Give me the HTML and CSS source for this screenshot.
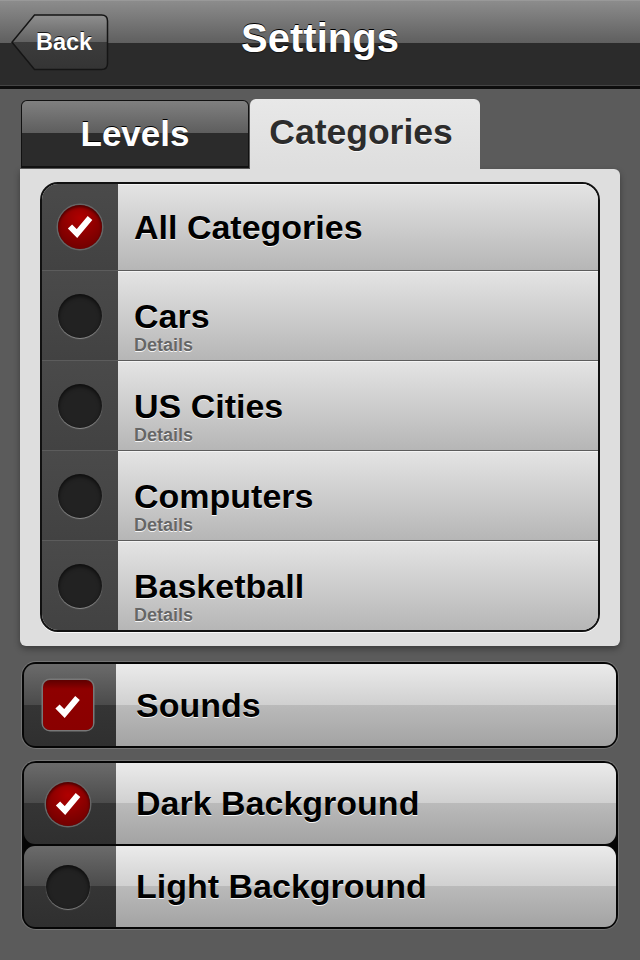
FILE: index.html
```html
<!DOCTYPE html>
<html lang="en">
<head>
  <meta charset="UTF-8" />
  <meta name="viewport" content="width=device-width, initial-scale=1.0"/>
  <title>Settings</title>
  <link rel="stylesheet" href="styles.css">
</head>
<body>

  <header class="navbar">
    <a class="back-btn" href="#">
      <svg class="back-shape" width="98" height="57" viewBox="0 0 98 57">
        <defs>
          <linearGradient id="backGrad" x1="0" y1="0" x2="0" y2="1">
            <stop offset="0" stop-color="#8f8f8f"/>
            <stop offset="0.5" stop-color="#616161"/>
            <stop offset="0.5" stop-color="#3c3c3c"/>
            <stop offset="1" stop-color="#343434"/>
          </linearGradient>
        </defs>
        <path d="M23.5 1 H90.5 Q96.5 1 96.5 7 V49.5 Q96.5 55.5 90.5 55.5 H23.5 L1 28.25 Z" fill="url(#backGrad)" stroke="#151515" stroke-width="1.5"/>
      </svg>
      <span class="back-label">Back</span>
    </a>
    <h1 class="nav-title">Settings</h1>
    <span></span>
  </header>

  <main class="content">
    <div class="tabs">
      <div class="tab tab-dark">Levels</div>
      <div class="tab tab-active">Categories</div>
    </div>

    <section class="panel">
      <ul class="list">
        <li class="row">
          <div class="row-side">
            <span class="radio radio-on">
              <svg width="44" height="44" viewBox="0 0 44 44"><path d="M12 21.5 L19 28.5 L32 13" fill="none" stroke="#fff" stroke-width="6"/></svg>
            </span>
          </div>
          <div class="row-body">
            <span class="row-title">All Categories</span>
          </div>
        </li>
        <li class="row">
          <div class="row-side"><span class="radio"></span></div>
          <div class="row-body">
            <span class="row-title">Cars</span>
            <span class="row-detail">Details</span>
          </div>
        </li>
        <li class="row">
          <div class="row-side"><span class="radio"></span></div>
          <div class="row-body">
            <span class="row-title">US Cities</span>
            <span class="row-detail">Details</span>
          </div>
        </li>
        <li class="row">
          <div class="row-side"><span class="radio"></span></div>
          <div class="row-body">
            <span class="row-title">Computers</span>
            <span class="row-detail">Details</span>
          </div>
        </li>
        <li class="row">
          <div class="row-side"><span class="radio"></span></div>
          <div class="row-body">
            <span class="row-title">Basketball</span>
            <span class="row-detail">Details</span>
          </div>
        </li>
      </ul>
    </section>

    <div class="group group-sounds">
      <div class="opt">
        <div class="opt-side">
          <span class="checkbox">
            <svg width="50" height="50" viewBox="0 0 50 50"><path d="M14.5 26.5 L21.5 33.5 L34.5 18" fill="none" stroke="#fff" stroke-width="6"/></svg>
          </span>
        </div>
        <div class="opt-body">Sounds</div>
      </div>
    </div>

    <div class="group group-theme">
      <div class="opt">
        <div class="opt-side">
          <span class="radio radio-on">
            <svg width="44" height="44" viewBox="0 0 44 44"><path d="M12 21.5 L19 28.5 L32 13" fill="none" stroke="#fff" stroke-width="6"/></svg>
          </span>
        </div>
        <div class="opt-body">Dark Background</div>
      </div>
      <div class="opt">
        <div class="opt-side"><span class="radio"></span></div>
        <div class="opt-body">Light Background</div>
      </div>
    </div>
  </main>

</body>
</html>
```

FILE: styles.css
```css
* {
  box-sizing: border-box;
}

body {
  font-family: 'Liberation Sans', Arial, sans-serif;
  font-weight: bold;
  background: #5b5b5b;
  margin: 0;
  padding: 0;
  height: 960px;
  overflow: hidden;
}

/* top bar */
.navbar {
  display: grid;
  grid-template-columns: 1fr auto 1fr;
  align-items: start;
  height: 89px;
  background: linear-gradient(to bottom, #a6a6a6 0, #8c8c8c 1px, #5f5f5f 43px, #2b2b2b 43px, #2b2b2b 85px, #444 85px, #444 86px, #0d0d0d 86px);
}

.back-btn {
  position: relative;
  display: block;
  width: 98px;
  height: 57px;
  margin: 14px 0 0 11px;
  text-decoration: none;
}

.back-shape {
  position: absolute;
  left: 0;
  top: 0;
}

.back-label {
  position: relative;
  display: block;
  padding-left: 25px;
  line-height: 57px;
  font-size: 23.5px;
  color: #fff;
  text-shadow: 0 -1px 0 rgba(0, 0, 0, 0.8);
}

.nav-title {
  margin: 0;
  padding-top: 15px;
  font-size: 40px;
  line-height: 46px;
  color: #fff;
  text-shadow: 0 -1px 0 #000, 0 1px 1px rgba(0, 0, 0, 0.5);
}

.content {
  padding: 10px 20px 0;
}

/* tabs */
.tabs {
  display: flex;
  align-items: flex-end;
}

.tab {
  display: flex;
  align-items: center;
  justify-content: center;
  font-size: 35px;
  border-radius: 6px 6px 0 0;
}

.tab-dark {
  width: 228px;
  height: 68px;
  margin-left: 1px;
  margin-bottom: 1px;
  color: #fff;
  border: 1px solid #111;
  border-bottom-width: 2px;
  background: linear-gradient(to bottom, #808080, #5d5d5d 50%, #2b2b2b 50%, #2b2b2b);
  text-shadow: 0 -1px 0 #000;
}

.tab-active {
  width: 230px;
  height: 70px;
  margin-left: 1px;
  padding: 0 8px 3px 0;
  font-size: 35.5px;
  color: #2c2c2c;
  background: linear-gradient(to bottom, #e8e8e8, #dedede);
  text-shadow: 0 1px 0 rgba(255, 255, 255, 0.8);
}

/* categories panel */
.panel {
  background: #dedede;
  border-radius: 0 6px 6px 6px;
  padding: 13px 20px 14px;
  box-shadow: 0 3px 6px rgba(0, 0, 0, 0.35);
}

.list {
  list-style: none;
  margin: 0;
  padding: 0;
  border: 2px solid #111;
  border-radius: 18px;
  overflow: hidden;
  box-shadow: 0 1px 0 rgba(255, 255, 255, 0.8);
}

.row {
  display: flex;
  height: 86px;
}

.row + .row {
  height: 90px;
  border-top: 1px solid #5c5c5c;
}

.row-side {
  width: 76px;
  display: flex;
  align-items: center;
  justify-content: center;
  background: linear-gradient(to bottom, #4a4a4a, #424242);
}

.row-body {
  flex: 1;
  display: flex;
  flex-direction: column;
  justify-content: center;
  padding-left: 16px;
  background: linear-gradient(to bottom, #e4e4e4, #b6b6b6);
  box-shadow: inset 0 1px 0 rgba(255, 255, 255, 0.6);
}

.row-title {
  font-size: 34px;
  line-height: 38px;
  color: #000;
  text-shadow: 0 1px 0 rgba(255, 255, 255, 0.9);
}

.row-detail {
  font-size: 18px;
  line-height: 20px;
  margin-bottom: -20px;
  color: #666;
  text-shadow: 0 1px 0 rgba(255, 255, 255, 0.9);
}

/* radio + checkbox */
.radio {
  display: block;
  width: 44px;
  height: 44px;
  border-radius: 50%;
  background: #222;
  box-shadow: inset 0 2px 4px rgba(0, 0, 0, 0.7), 0 1px 1px rgba(255, 255, 255, 0.4);
}

.radio-on {
  background: radial-gradient(circle at 50% 30%, #b00000, #760000 75%);
  box-shadow: 0 0 0 1.5px #666, inset 0 2px 3px rgba(0, 0, 0, 0.5);
}

.radio svg,
.checkbox svg {
  display: block;
}

.checkbox {
  display: block;
  width: 50px;
  height: 50px;
  border-radius: 7px;
  background: linear-gradient(to bottom, #5e0000, #8e0000 18%, #8a0000);
  box-shadow: 0 0 0 1.5px #787878;
}

/* option groups */
.group {
  display: flex;
  flex-direction: column;
  gap: 2px;
  margin: 0 2px;
  padding: 2px;
  background: #050505;
  border-radius: 14px;
  box-shadow: 0 0 0 1px #757575;
}

.group-sounds {
  margin-top: 16px;
}

.group-sounds .opt {
  height: 82px;
}

.group-theme {
  margin-top: 13px;
}

.opt {
  display: flex;
  height: 81px;
  border-radius: 11px;
  overflow: hidden;
}

.opt-side {
  width: 92px;
  display: flex;
  align-items: center;
  justify-content: center;
  padding-right: 4px;
  background: linear-gradient(to bottom, #6b6b6b, #4b4b4b 50%, #353535 50%, #2f2f2f);
}

.opt-body {
  flex: 1;
  display: flex;
  align-items: center;
  padding-left: 20px;
  font-size: 34px;
  color: #000;
  text-shadow: 0 1px 0 rgba(255, 255, 255, 0.9);
  background: linear-gradient(to bottom, #ebebeb, #d0d0d0 50%, #bababa 50%, #a3a3a3);
}
```
